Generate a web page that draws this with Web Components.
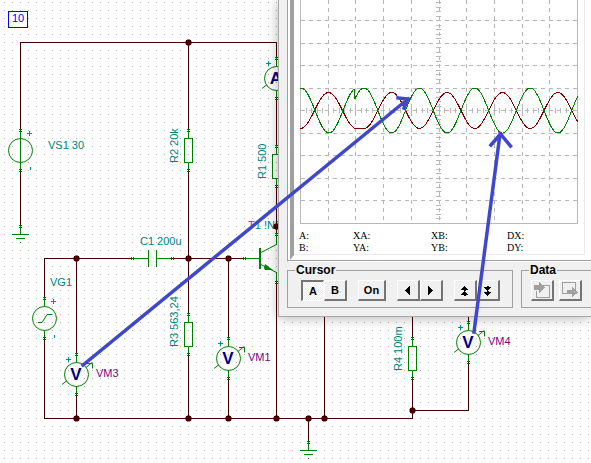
<!DOCTYPE html>
<html lang="en">
<head>
<meta charset="utf-8">
<title>Circuit and oscilloscope</title>
<style>
body { margin: 0; font: 11px/12px "Liberation Sans", Arial, sans-serif; }
</style>
</head>
<body>
<circuit-desk>
  <circuit-sheet></circuit-sheet>
  <scope-window slot="window">
    <scope-screen slot="screen"></scope-screen>
    <tool-group label="Cursor">
      <tool-pair><tool-button label="A" pressed>A</tool-button><tool-button label="B">B</tool-button></tool-pair>
      <tool-button label="On" wide>On</tool-button>
      <tool-pair><tool-button label="Step left" icon="left"></tool-button><tool-button label="Step right" icon="right"></tool-button></tool-pair>
      <tool-pair><tool-button label="Next maximum" icon="up"></tool-button><tool-button label="Next minimum" icon="down"></tool-button></tool-pair>
    </tool-group>
    <tool-group label="Data" open-end>
      <tool-button label="Import curve" icon="import"></tool-button>
      <tool-button label="Export curve" icon="export"></tool-button>
    </tool-group>
  </scope-window>
  <pointer-arrows slot="overlay"></pointer-arrows>
</circuit-desk>
<script>
class Base extends HTMLElement {
  connectedCallback() {
    if (!this.shadowRoot) this.attachShadow({ mode: 'open' }).innerHTML = this.render();
  }
}

customElements.define('circuit-desk', class extends Base {
  render() {
    return `<style>
      :host { display: block; position: relative; min-height: 100vh; overflow: hidden; background: #fff; }
      .window { position: absolute; top: 0; left: 278px; right: 0; }
      .overlay { position: absolute; inset: 0; pointer-events: none; }
    </style>
    <slot></slot>
    <div class="window"><slot name="window"></slot></div>
    <div class="overlay"><slot name="overlay"></slot></div>`;
  }
});

customElements.define('circuit-sheet', class extends Base {
  render() {
    const terminals = [];
    const terminal = (x, y, flat) => {
      terminals.push(flat
        ? `M${x - 1} ${y - 1}h1v3h-1zM${x + 1} ${y - 1}h1v3h-1z`
        : `M${x - 1} ${y - 1}h3v1h-3zM${x - 1} ${y + 1}h3v1h-3z`);
      return '';
    };
    const plus = (x, y) => `<path class="sign" d="M${x - 2} ${y + .5}h5M${x + .5} ${y - 2}v5"/>`;
    const resistor = (x, y) => `<path class="part" d="M${x + .5} ${y - 20}v8M${x + .5} ${y + 12}v8"/>
      <rect class="part" x="${x - 3.5}" y="${y - 11.5}" width="8" height="24"/>${terminal(x, y - 20)}${terminal(x, y + 20)}`;
    const meter = (x, y, letter) => `<g transform="translate(${x} ${y})">
      <circle class="ring" cx=".5" cy=".5" r="12"/>
      <path class="part" d="M.5-20v8M.5 12v8"/><path class="ring" d="M-14 10.500l5-4M10-6.500l6-5M11-10.500h5.500v5"/>
      </g>${terminal(x, y - 20)}${terminal(x, y + 20)}${plus(x - 8, y - 15)}
      <text class="letter" x="${x}" y="${y + 6}">${letter}</text>`;
    const ground = (x, y) => `<path class="part" d="M${x + .5} ${y - 8}v8M${x - 8} ${y + .5}h17M${x - 4} ${y + 4.5}h9M${x} ${y + 8.500}h1"/>${terminal(x, y - 8)}`;
    const node = ([x, y]) => `<path class="node" d="M${x - 1} ${y - 2}h3l1 1v3l-1 1h-3l-1-1v-3z"/>`;
    const label = (x, y, t) => `<text x="${x}" y="${y}">${t}</text>`;
    const upright = (x, y, t) => `<text transform="translate(${x} ${y}) rotate(-90)">${t}</text>`;
    return `<style>
      :host { display: block; }
      svg { display: block; width: 100%; height: 100vh; font: 11px "Liberation Sans", Arial, sans-serif; }
      text { fill: #008080; }
      .wire, .part, .sign, .ring { fill: none; shape-rendering: crispEdges; }
      .wire { stroke: #400000; }
      .part, .ring { stroke: #008000; }
      .ring { shape-rendering: auto; }
      .term { fill: #e00000; shape-rendering: crispEdges; }
      .sign { stroke: #008ba0; }
      .node { fill: #400000; stroke: #400000; }
      .solid { fill: #008000; }
      .meter-name { fill: #800080; }
      .letter { fill: #000080; font-size: 17px; font-weight: bold; text-anchor: middle; }
      .page { fill: #0000ff; }
    </style>
    <svg role="img" aria-label="Amplifier circuit">
      <defs><pattern id="dots" width="8" height="8" patternUnits="userSpaceOnUse"><rect x="4" y="2" width="1" height="1" fill="#b0b0b0"/></pattern></defs>
      <rect width="100%" height="100%" fill="url(#dots)"/>
      <rect x="8.500" y="11.500" width="19" height="16" fill="#fff" stroke="#0000ff" shape-rendering="crispEdges"/>
      <text class="page" x="12" y="22">10</text>
      ${label(48, 149, 'VS1 30')}${label(50, 286, 'VG1')}${label(140, 245, 'C1 200u')}${label(248, 229, 'T1 !NPN')}
      ${upright(178, 163, 'R2 20k')}${upright(178, 347, 'R3 563,24')}${upright(266, 179, 'R1 500')}${upright(402, 371, 'R4 100m')}
      <text class="meter-name" x="96" y="377">VM3</text>
      <text class="meter-name" x="248" y="361">VM1</text>
      <text class="meter-name" x="488" y="345">VM4</text>
      <path class="wire" d="M20.500 130V42.500H276.500V58M20.500 170V226M188.500 42V130M188.500 170V314M188.500 354V418
        M44.500 298V258.500H132M172 258.500H244M76.500 258V354M76.500 394V418M44.500 338V418.500H412.500V378M228.500 258V338M228.500 378V418
        M276.500 98V146M276.500 186V234M276.500 282V418M324.500 300V418M412.500 300V338M468.500 300V322M468.500 362V410.500H412M308.500 418V442"/>
      <circle class="ring" cx="20.500" cy="150.500" r="12"/><path class="part" d="M20.500 130V170"/>
      ${plus(29, 133)}<path class="sign" d="M30.500 167v3M54.500 335v3"/>${terminal(20, 130)}${terminal(20, 170)}
      <circle class="ring" cx="44.500" cy="318.500" r="12"/><path class="part" d="M44.500 298v8M44.500 331v7"/>
      <path class="ring" d="M38 322.500h4l5-8h5"/>${plus(53, 301)}${terminal(44, 298)}${terminal(44, 338)}
      <path class="part" d="M132 258.500h16M148.500 250v17M156.500 250v17M157 258.500h15"/>${terminal(132, 258, 1)}${terminal(172, 258, 1)}
      <path class="part" d="M244 258.500h16M276.500 234v11M276.500 272v10"/><path class="ring" d="M261 252.500l15.500-8M261 264.500l15.500 8"/>
      <rect class="solid" x="259" y="248" width="2" height="21"/><path class="solid" d="M265 264l8 6h-8l-1-2z"/>
      ${terminal(244, 258, 1)}${terminal(276, 234)}${terminal(276, 282)}
      ${resistor(188, 150)}${resistor(188, 334)}${resistor(276, 166)}${resistor(412, 358)}
      ${meter(276, 78, 'A')}${meter(76, 374, 'V')}${meter(228, 358, 'V')}${meter(468, 342, 'V')}
      ${ground(20, 234)}${ground(308, 450)}
      ${[[188, 42], [76, 258], [188, 258], [228, 258], [276, 226], [76, 418], [188, 418], [228, 418], [276, 418], [308, 418], [324, 418], [412, 410]].map(node).join('')}
      <path class="term" d="${terminals.join('')}"/>
    </svg>`;
  }
});

customElements.define('scope-window', class extends Base {
  render() {
    return `<style>
      :host { display: block; background: #f0f0f0; border: solid #a8a8a8; border-width: 0 0 1px 1px;
        padding: 0 0 8px 8px; box-shadow: 0 1px 12px rgba(0,0,0,.3); }
      .tools { display: flex; gap: 8px; margin-top: 2px; }
    </style>
    <slot name="screen"></slot>
    <div class="tools"><slot></slot></div>`;
  }
});

customElements.define('scope-screen', class extends Base {
  render() {
    const turn = 2 * Math.PI;
    let green = '', red = '';
    for (let x = 0; x <= 278; x++) {
      const g = x < 55 ? Math.cos(turn * (x - 1) / 56) : Math.cos(turn * (x - 64) / 55.4);
      const r = x < 55 ? Math.cos(turn * (x - .5) / 56) : x < 64 ? 1 : Math.cos(turn * (x - 64) / 55.4);
      green += `${x ? 'L' : 'M'}${x} ${(110.5 - 22.5 * g).toFixed(1)}`;
      red += `${x ? 'L' : 'M'}${x} ${(110.5 + 18 * r).toFixed(1)}`;
    }
    let grid = '', ticks = '';
    for (let i = 1; i < 10; i++) {
      grid += `M${Math.round(27.7 * i) + .5} 0V223`;
      grid += `M1 ${Math.round(223 - 22.55 * i) + .5}H277`;
    }
    for (let i = 1; i < 50; i++) ticks += `M${Math.round(5.54 * i) + .5} 108V113`;
    for (let i = 0; i < 50; i++) ticks += `M136 ${Math.round(223 - 4.51 * i) + .5}h5`;
    return `<style>
      :host { display: block; border-left: 1px solid #a0a0a0; border-bottom: 1px solid #fff; }
      .bevel { border: solid #a0a0a0; border-width: 0 0 1px; background: #fff; padding: 0 6px 0 2px; }
      .face { border-left: 4px solid #a0a0a0; border-bottom: 5px solid #fff; }
      .paper { border: solid #ececec; border-width: 0 1px 1px 0; }
      svg { display: block; width: calc(100% - 12px); height: 224px; margin: 0 6px 6px; shape-rendering: crispEdges; }
      path { fill: none; }
      .frame, .grid, .ticks { stroke: #b8b8b8; }
      .grid { stroke-dasharray: 4 4; }
      .green { stroke: #008000; } .red { stroke: #800000; }
      .values { display: grid; grid-template-columns: 54px 78px 76px auto; padding-left: 5px;
        font: 10px/12px "Liberation Serif", "Times New Roman", serif; color: #000; }
    </style>
    <div class="bevel"><div class="face"><div class="paper">
      <svg viewBox="0 0 278 224" preserveAspectRatio="none" role="img" aria-label="Two sine traces in opposite phase">
        <path class="grid" d="${grid}"/><path class="ticks" d="${ticks}"/>
        <path class="frame" d="M.5 0V223.500H277.500V0"/>
        <path class="red" d="${red}"/><path class="green" d="${green}"/>
      </svg>
      <div class="values"><span>A:</span><span>XA:</span><span>XB:</span><span>DX:</span><span>B:</span><span>YA:</span><span>YB:</span><span>DY:</span></div>
    </div></div></div>`;
  }
});

customElements.define('tool-group', class extends Base {
  render() {
    return `<style>
      :host { display: block; }
      :host([open-end]) { flex: 1; }
      fieldset { margin: 0; min-width: 0; border: 1px solid #a0a0a0; padding: 4px 12px 6px 7px; }
      :host([open-end]) fieldset { border-right: 0; padding-right: 0; }
      legend { padding: 0 1px; font-size: 12px; line-height: 12px; font-weight: bold; color: #000; }
      .row { display: flex; gap: 11px; padding-left: 6px; }
      :host([open-end]) .row { gap: 5px; padding-left: 2px; }
    </style>
    <fieldset><legend>${this.getAttribute('label')}</legend><div class="row"><slot></slot></div></fieldset>`;
  }
});

customElements.define('tool-pair', class extends Base {
  render() { return `<style>:host { display: flex; }</style><slot></slot>`; }
});

const ICONS = {
  left: '<path d="M12 5v9L7 9.500z"/>',
  right: '<path d="M7 5v9l5-4.500z"/>',
  up: '<path d="M9.500 5l4 4h-3v1h-2V9h-3zM9.500 10l4 4h-3v1h-2v-1h-3z"/>',
  down: '<path d="M8.500 5h2v1h3l-4 4-4-4h3zM8.500 10h2v1h3l-4 4-4-4h3z"/>',
  import: '<path d="M7 4.500h10.500v12h-13V10" fill="none" stroke="#a0a0a0"/><path fill="#a0a0a0" d="M2 4h5V1l6 5.500L7 12V9H2z"/>',
  export: '<path d="M8 12.500H2.500v-11h13v7" fill="none" stroke="#a0a0a0"/><path fill="#a0a0a0" d="M7 9h5V6l6 5.500-6 4.500v-3H7z"/>'
};

customElements.define('tool-button', class extends Base {
  render() {
    const icon = ICONS[this.getAttribute('icon')];
    return `<style>
      :host { display: block; }
      button { display: grid; place-items: center; box-sizing: border-box; width: 23px; height: 21px; margin: 0; padding: 0;
        border: solid; border-width: 1px 2px 2px 1px; border-color: #fff #747474 #747474 #fff; border-radius: 0;
        background: #f0f0f0; color: #000; font: bold 11px/12px "Liberation Sans", Arial, sans-serif; }
      :host([wide]) button { width: 28px; }
      :host([pressed]) button { border-width: 2px 1px 1px 2px; border-color: #747474 #fff #fff #747474;
        background: repeating-conic-gradient(#fff 0 25%, #ececec 0 50%) 0 0 / 2px 2px; }
      svg { display: block; width: 20px; height: 18px; shape-rendering: crispEdges; }
    </style>
    <button type="button" aria-label="${this.getAttribute('label')}">${icon ? `<svg viewBox="0 0 20 18" aria-hidden="true">${icon}</svg>` : '<slot></slot>'}</button>`;
  }
});

customElements.define('pointer-arrows', class extends Base {
  render() {
    return `<style>
      :host { display: block; height: 100%; }
      svg { display: block; width: 100%; height: 100%; }
      path { fill: none; stroke: #3f48cc; stroke-width: 3.5; stroke-linecap: square; }
    </style>
    <svg aria-hidden="true">
      <path d="M83 365L408 99M398 98l10 1-4 9"/>
      <path d="M474 332L500 134M491 145l9.500-11 10 12"/>
    </svg>`;
  }
});
</script>
</body>
</html>
